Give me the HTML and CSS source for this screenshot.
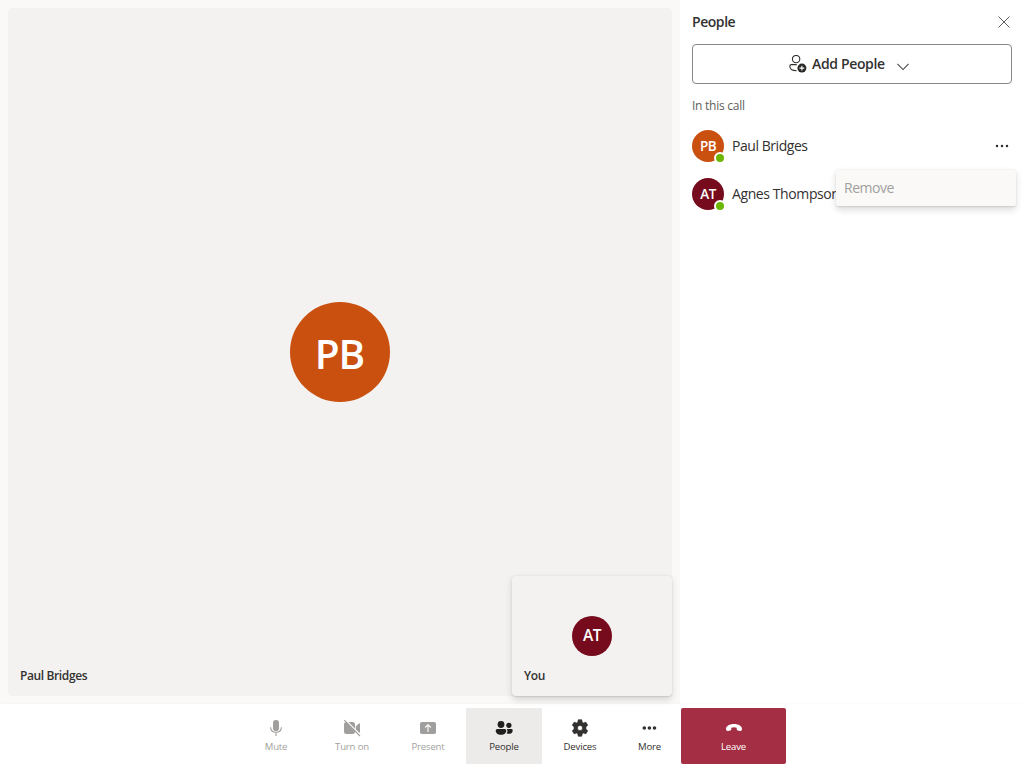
FILE: index.html
```html
<!DOCTYPE html>
<html lang="en">
<head>
<meta charset="utf-8">
<title>Call</title>
<link rel="stylesheet" href="styles.css">
</head>
<body>
<div class="app">
  <main class="main">
    <section class="stage">
      <div class="tile">
        <div class="avatar avatar-large orange"><span>PB</span></div>
        <span class="tile-name name-remote">Paul Bridges</span>
        <div class="self">
          <div class="avatar avatar-medium maroon"><span>AT</span></div>
          <span class="tile-name name-self">You</span>
        </div>
      </div>
    </section>
    <aside class="panel">
      <header class="panel-head">
        <h2 class="title">People</h2>
        <button class="close" aria-label="Close"><svg width="12" height="12" viewBox="0 0 12 12"><path d="M.5.5l11 11M11.5.5l-11 11" fill="none" stroke="#605e5c" stroke-width="1"/></svg></button>
      </header>
      <button class="add">
        <svg width="18" height="18" viewBox="0 0 18 18"><circle cx="7.1" cy="4.1" r="3.7" fill="none" stroke="#323130" stroke-width="1.1"/><path d="M7.8 9.6H2.5Q.8 9.6.8 11.3C.8 14.1 3.3 15.7 7.6 15.7" fill="none" stroke="#323130" stroke-width="1.1"/><circle cx="12.9" cy="13.1" r="4.5" fill="#292827"/><path d="M12.9 10.7v4.8M10.5 13.1h4.8" stroke="#fff" stroke-width="1.1"/></svg>
        <span class="add-label">Add People</span>
        <svg class="chevron" width="12" height="8" viewBox="0 0 12 8"><path d="M.4.8L6 6.5 11.6.8" fill="none" stroke="#484644" stroke-width="1.05"/></svg>
      </button>
      <p class="caption">In this call</p>
      <ul class="people">
        <li class="person">
          <div class="avatar avatar-small orange"><span>PB</span><i class="presence"></i></div>
          <span class="person-name name-paul">Paul Bridges</span>
          <svg class="dots" width="14" height="4" viewBox="0 0 14 4"><g fill="#323130"><circle cx="2" cy="2" r="1.25"/><circle cx="7" cy="2" r="1.25"/><circle cx="12" cy="2" r="1.25"/></g></svg>
          <div class="menu"><span class="menu-label">Remove</span></div>
        </li>
        <li class="person">
          <div class="avatar avatar-small maroon"><span>AT</span><i class="presence"></i></div>
          <span class="person-name name-agnes">Agnes Thompson</span>
        </li>
      </ul>
    </aside>
  </main>
  <nav class="bar">
    <button class="control disabled">
      <svg width="20" height="20" viewBox="0 0 20 20"><rect x="7" y="2" width="6" height="11" rx="2.8" fill="currentColor"/><path d="M4.6 9.3c.1 3.3 2.2 5 5.4 5s5.3-1.7 5.4-5M10 14.3V18" fill="none" stroke="currentColor" stroke-width="1.1"/></svg>
      <span>Mute</span>
    </button>
    <button class="control disabled">
      <svg width="20" height="20" viewBox="0 0 20 20"><path d="M4.5 4H10.5q2.5 0 2.5 2.5v7Q13 16 10.5 16H4.5Q2 16 2 13.5v-7Q2 4 4.5 4zM13.8 8.3L17 5.5q1-.7 1 .4v8.2q0 1.1-1 .4l-3.2-2.8z" fill="currentColor"/><path d="M3 1.6L18.8 17.4" stroke="#fff" stroke-width="1.4"/><path d="M2.2 2.2L18 18" stroke="currentColor" stroke-width="1.1"/></svg>
      <span>Turn on</span>
    </button>
    <button class="control disabled">
      <svg width="20" height="20" viewBox="0 0 20 20"><rect x="2" y="4" width="16" height="12" rx="1.7" fill="currentColor"/><path d="M10 14V7M7.2 9.5L10 6.7l2.8 2.8" fill="none" stroke="#fff" stroke-width="1.1"/></svg>
      <span>Present</span>
    </button>
    <button class="control active">
      <svg width="20" height="20" viewBox="0 0 20 20"><g fill="#201f1e"><circle cx="7" cy="6.5" r="3.4"/><circle cx="14.9" cy="7.3" r="2.6"/><path d="M3.3 11h7.5q1.5 0 1.5 1.5c0 2.7-2.3 4.3-5.3 4.3s-5.3-1.6-5.3-4.3Q1.7 11 3.3 11zM12.8 11h4.5q1.4 0 1.4 1.4c0 2.2-1.6 3.4-3.9 3.4q-1.2 0-2.2-.5 1.6-2.4.2-4.3z"/></g></svg>
      <span>People</span>
    </button>
    <button class="control">
      <svg width="20" height="20" viewBox="0 0 20 20"><path fill-rule="evenodd" fill="currentColor" stroke="currentColor" stroke-width=".7" stroke-linejoin="round" d="M8.3 1.8h3.4l.5 2.4 1.3.8 2.4-.8 1.8 3-1.8 1.7v2.2l1.8 1.7-1.8 3-2.4-.8-1.3.8-.5 2.4H8.3l-.5-2.4-1.3-.8-2.4.8-1.8-3 1.8-1.7V8.9L2.3 7.2l1.8-3 2.4.8 1.3-.8zM10 7.4a2.600 2.600 0 1 0 0 5.200 2.600 2.600 0 1 0 0-5.200z"/></svg>
      <span>Devices</span>
    </button>
    <button class="control more">
      <svg width="20" height="20" viewBox="0 0 20 20"><g fill="currentColor"><circle cx="4.3" cy="10" r="1.8"/><circle cx="9.4" cy="10" r="1.8"/><circle cx="14.5" cy="10" r="1.8"/></g></svg>
      <span>More</span>
    </button>
    <button class="control leave">
      <svg width="20" height="20" viewBox="0 0 20 20"><path fill="currentColor" d="M10 5.9c4.8 0 8.1 2.2 8 5.2-.1 1.5-.8 2.1-2.1 1.9l-2-.4q-1-.2-1.1-1.2l-.2-1.7Q10 9 7.4 9.7l-.2 1.7q-.1 1-1.1 1.2l-2 .4c-1.3.2-2-.4-2.1-1.9-.1-3 3.2-5.2 8-5.2z"/></svg>
      <span>Leave</span>
    </button>
  </nav>
</div>
</body>
</html>
```
FILE: styles.css
```css
* { box-sizing: border-box; }
body { margin: 0; background: #fff; color: #323130; font-family: "Open Sans", "Noto Sans", sans-serif; }
button { border: 0; margin: 0; padding: 0; background: none; color: inherit; font-family: inherit; }
svg { display: block; flex: none; }
.app { width: 1024px; height: 768px; display: flex; flex-direction: column; overflow: hidden; }
.main { height: 704px; display: flex; }
.stage { width: 680px; padding: 8px; background: #faf9f8; }
.tile { position: relative; height: 688px; border-radius: 4px; background: #f3f2f1; display: flex; align-items: center; justify-content: center; }
.avatar { position: relative; flex: none; border-radius: 50%; display: flex; align-items: center; justify-content: center; color: #fff; font-weight: 600; line-height: 1; }
.orange { background: #ca5010; }
.maroon { background: #750b1c; }
.avatar-large { width: 100px; height: 100px; font-size: 40.5px; letter-spacing: -1px; padding: 5px 1px 0 0; }
.avatar-medium { width: 40px; height: 40px; font-size: 15.5px; letter-spacing: -.5px; }
.avatar-small { width: 32px; height: 32px; font-size: 13.5px; letter-spacing: -.5px; padding-top: 1px; }
.presence { position: absolute; right: -2px; bottom: -2px; width: 12px; height: 12px; border: 2px solid #fff; border-radius: 50%; background: #6bb700; }
.tile-name { position: absolute; left: 12px; bottom: 12px; font-size: 12px; line-height: 16px; font-weight: 600; letter-spacing: -.38px; white-space: nowrap; }
.self { position: absolute; right: 0; bottom: 0; width: 160px; height: 120px; border-radius: 4px; background: #f3f2f1; box-shadow: 0 3.2px 7.2px rgba(0,0,0,.132), 0 .6px 1.8px rgba(0,0,0,.108); display: flex; align-items: center; justify-content: center; }
.panel { width: 344px; padding: 0 12px; background: #fff; }
.panel-head { height: 44px; display: flex; align-items: center; justify-content: space-between; padding-right: 2px; }
.title { margin: 0; font-size: 14px; line-height: 20px; font-weight: 600; letter-spacing: -.45px; }
.add { width: 320px; height: 40px; border: 1px solid #8a8886; border-radius: 4px; display: flex; align-items: center; padding-left: 96px; }
.add-label { margin-left: 5px; width: 74px; font-size: 14px; line-height: 20px; font-weight: 600; letter-spacing: -.35px; text-align: left; white-space: nowrap; }
.chevron { margin: 6px 0 0 11px; }
.caption { margin: 14px 0 8px; font-size: 12px; line-height: 16px; color: #605e5c; letter-spacing: -.25px; }
.people { list-style: none; margin: 0; padding: 0; }
.person { position: relative; height: 48px; display: flex; align-items: center; }
.person-name { margin-left: 8px; font-size: 14px; line-height: 20px; letter-spacing: -.45px; white-space: nowrap; }
.name-agnes { letter-spacing: -.4px; }
.dots { margin: 0 3px 0 auto; }
.menu { position: absolute; z-index: 1; right: -4px; top: 48px; width: 180px; height: 36px; padding: 0 8px 1px; display: flex; align-items: center; border-radius: 2px; background: #faf9f8; color: #a19f9d; box-shadow: 0 3.2px 7.2px rgba(0,0,0,.132), 0 .6px 1.8px rgba(0,0,0,.108); font-size: 14px; letter-spacing: -.5px; }
.bar { height: 64px; padding: 4px 0; background: #fff; box-shadow: 0 0 4px rgba(0,0,0,.03); display: flex; justify-content: center; }
.control { width: 76px; height: 56px; display: flex; flex-direction: column; align-items: center; padding-top: 10px; font-size: 9.6px; line-height: 16px; letter-spacing: -.18px; }
.control span { margin-top: 1px; }
.disabled { color: #a19f9d; }
.active { background: #edebe9; }
.more { width: 63px; }
.leave { width: 105px; border-radius: 2px; background: #a42e43; color: #fff; }
```
